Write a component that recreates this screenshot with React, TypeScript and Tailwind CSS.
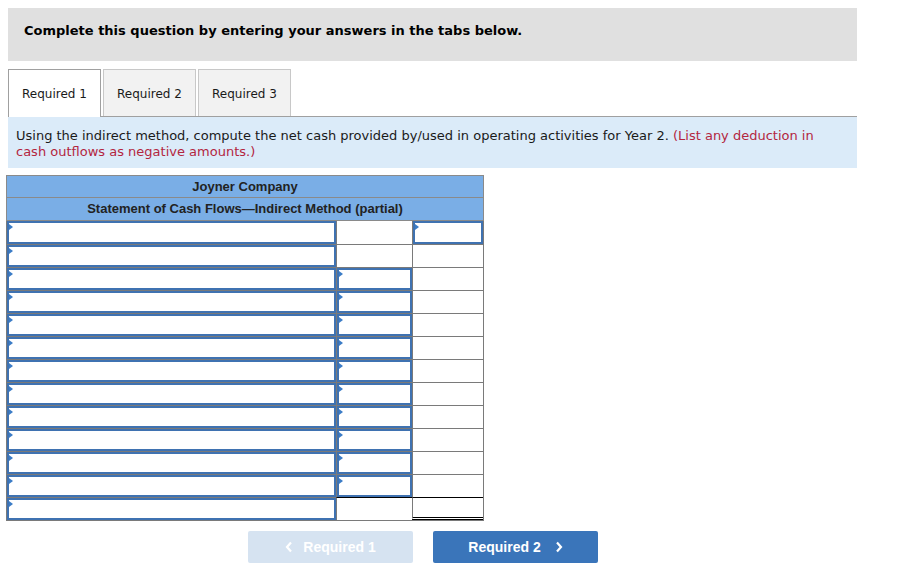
import React from "react";

type Cell = "input" | "empty";
type Row = { cells: [Cell, Cell, Cell]; total?: boolean };

const rows: Row[] = [
  { cells: ["input", "empty", "input"] },
  { cells: ["input", "empty", "empty"] },
  ...Array.from({ length: 10 }, () => ({ cells: ["input", "input", "empty"] as [Cell, Cell, Cell] })),
  { cells: ["input", "empty", "empty"], total: true },
];

const widths = ["w-[330px]", "w-[77px]", "w-[71px]"];

function InputBox() {
  return (
    <div className="relative h-full w-full border-2 border-[#3f72b1] bg-white">
      <span className="absolute left-0 top-[1px] h-0 w-0 border-y-[3px] border-l-[4px] border-y-transparent border-l-[#3b7cc6]" />
    </div>
  );
}

export default function App() {
  return (
    <div className="min-h-screen bg-white pt-2 text-[#1a1a1a]" style={{ fontFamily: '"DejaVu Sans", Verdana, sans-serif' }}>
      {/* Instruction banner */}
      <div className="ml-2 h-[53px] w-[849px] bg-[#e0e0e0] pl-4 pt-[15px]">
        <p className="text-[13px] font-bold leading-[16px] text-black">
          Complete this question by entering your answers in the tabs below.
        </p>
      </div>

      {/* Tabs */}
      <div className="ml-2 mt-2 flex w-[849px] items-end">
        <div className="flex h-[48px] w-[93px] items-center justify-center border border-b-0 border-[#a0a0a0] bg-white text-[12px]">
          Required 1
        </div>
        {["Required 2", "Required 3"].map((t) => (
          <div key={t} className="flex h-[48px] flex-col">
            <div className="ml-[2px] flex h-[47px] w-[93px] items-center justify-center border border-b-0 border-[#c8c8c8] bg-[#f2f2f2] pt-px text-[12px]">
              {t}
            </div>
            <div className="h-px bg-[#a0a0a0]" />
          </div>
        ))}
        <div className="h-px flex-1 bg-[#a0a0a0]" />
      </div>

      <div className="ml-2 w-[849px] bg-[#dbebf9] pb-[8px] pl-2 pr-[30px] pt-[11px] text-[13px] leading-[16px]">
        Using the indirect method, compute the net cash provided by/used in operating activities for Year 2.{" "}
        <span className="text-[#b3263f]">(List any deduction in cash outflows as negative amounts.)</span>
      </div>

      {/* Statement table */}
      <div className="ml-[6px] mt-[7px] w-[478px]" style={{ fontFamily: '"Liberation Sans", Arial, sans-serif' }}>
        <div className="border border-[#8a8a8a] bg-[#7aaee6]">
          <div className="flex h-[22px] items-center justify-center border-b border-[#8a8a8a] text-[13px] font-bold text-[#222]">
            Joyner Company
          </div>
          <div className="flex h-[22px] items-center justify-center text-[13px] font-bold text-[#222]">
            Statement of Cash Flows—Indirect Method (partial)
          </div>
        </div>
        <div className="border-x border-b border-[#7a7a7a]">
          {rows.map((row, ri) => (
            <div key={ri} className="flex h-[23px]">
              {row.cells.map((c, ci) => (
                <div
                  key={ci}
                  className={`${widths[ci]} h-full ${ci > 0 ? "border-l border-[#7a7a7a]" : ""} ${
                    ri > 0 ? (row.total && ci > 0 ? "border-t border-t-black" : "border-t border-t-[#7a7a7a]") : ""
                  } ${row.total && ci === 2 ? "border-b-[3px] border-double border-b-black" : ""}`}
                >
                  {c === "input" ? <InputBox /> : null}
                </div>
              ))}
            </div>
          ))}
        </div>
      </div>

      {/* Navigation buttons */}
      <div className="ml-[248px] mt-[10px] flex gap-5" style={{ fontFamily: '"Liberation Sans", Arial, sans-serif' }}>
        <button className="flex h-[32px] w-[165px] items-center justify-center gap-[10px] rounded-[2px] bg-[#d6e3f1] text-[14px] font-bold text-white">
          <svg width="8" height="12" viewBox="0 0 8 12" fill="none" stroke="white" strokeWidth="2.2">
            <path d="M6 1.5 2 6l4 4.5" />
          </svg>
          Required 1
        </button>
        <button className="flex h-[32px] w-[165px] items-center justify-center gap-[14px] rounded-[2px] bg-[#3a75ba] text-[14px] font-bold text-white">
          Required 2
          <svg width="8" height="12" viewBox="0 0 8 12" fill="none" stroke="white" strokeWidth="2.2">
            <path d="M2 1.5 6 6l-4 4.5" />
          </svg>
        </button>
      </div>
    </div>
  );
}
